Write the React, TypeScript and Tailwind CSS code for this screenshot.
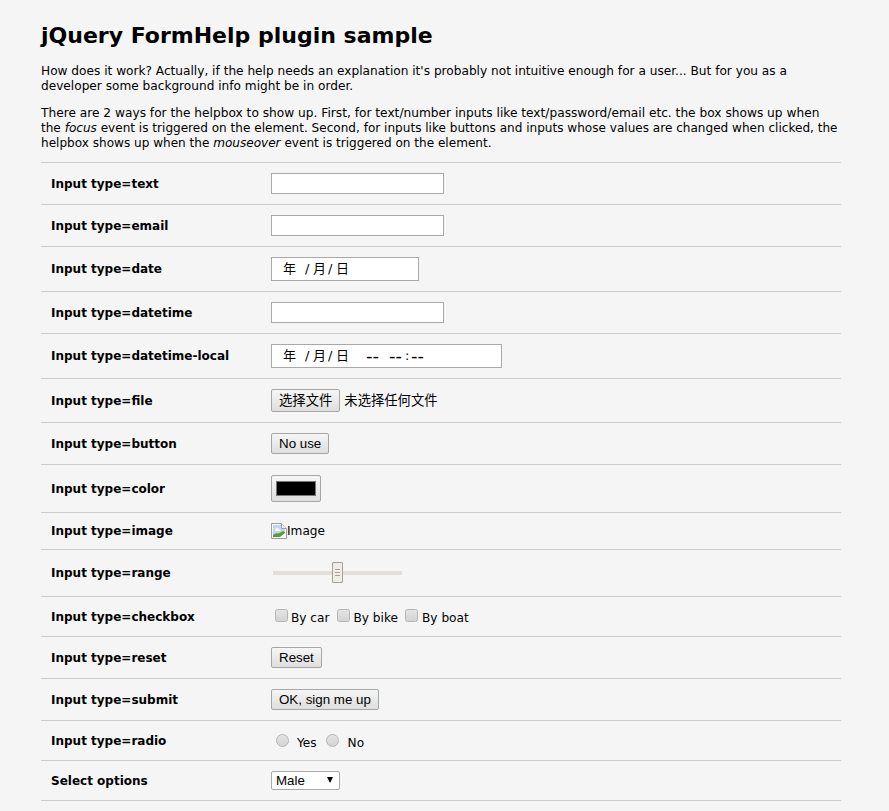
const verdana = "font-['DejaVu_Sans','Noto_Sans_CJK_SC',sans-serif]";
const arial = "font-['Liberation_Sans','Noto_Sans_CJK_SC',sans-serif]";

const buttonClass = `h-[21px] rounded-[2px] border border-[#a6a6a6] bg-gradient-to-b from-[#f6f6f6] to-[#dedede] px-[7px] text-[13.33px] leading-none text-black ${arial}`;
const boxClass = "h-[21px] w-[173px] border border-[#a9a9a9] bg-white";
const dateClass = `flex items-center border border-[#a9a9a9] bg-white pl-[11px] text-[13px] text-black whitespace-pre ${verdana}`;
const checkClass = "h-[13px] w-[13px] appearance-none rounded-[2.5px] border border-[#b5b5b5] bg-gradient-to-b from-[#e4e4e4] to-[#d4d4d4]";
const radioClass = "h-[13px] w-[13px] appearance-none rounded-full border border-[#b5b5b5] bg-gradient-to-b from-[#e4e4e4] to-[#d4d4d4]";
const dashClass = "inline-block text-[18px] leading-none";

function Row({ label, height, children }: { label: string; height: string; children: React.ReactNode }) {
  return (
    <div className={`flex items-center border-b border-[#cccccc] ${height}`}>
      <div className="w-[230px] shrink-0 pl-[10px] text-[12px] font-bold">{label}</div>
      {children}
    </div>
  );
}

function DateParts() {
  return (
    <>
      <span className="inline-block w-[21px]">年</span>
      <span className="inline-block w-[9px] pl-[1px]">/</span>
      <span className="inline-block w-[14px]">月</span>
      <span className="inline-block w-[9px] pl-[1px]">/</span>
      <span className="inline-block w-[13px]">日</span>
    </>
  );
}

function BrokenImage() {
  return (
    <svg width="16" height="16" viewBox="0 0 16 16" className="shrink-0">
      <path d="M0.5 0.5H10.5L15.5 5.5V15.5H0.5Z" fill="#fff" stroke="#a0a0a0" />
      <path d="M2 2H10V6H14V8L6 14H2Z" fill="#c0d6f6" />
      <path d="M4 7C4 5 7 4.5 8.5 6.5C9.5 6.5 10 7.5 9 8H4Z" fill="#fff" />
      <path d="M2 14V12C4 10.5 6 10 7.5 10.5L12 8L14 9V10L9 14Z" fill="#55a032" />
      <path d="M10.5 0.5V5.5H15.5" fill="#eeeeee" stroke="#a0a0a0" />
    </svg>
  );
}

export default function App() {
  return (
    <div className={`min-h-[811px] bg-[#f5f5f5] text-black ${verdana}`}>
      <div className="ml-[41px] w-[800px] pt-[21px]">
        <h1 className="text-[22px] font-bold leading-[30px]">jQuery FormHelp plugin sample</h1>
        <p className="mt-[13px] text-[12.15px] leading-[15px]">
          How does it work? Actually, if the help needs an explanation it's probably not intuitive enough for a user... But for you as a developer some background info might be in order.
        </p>
        <p className="mt-[12px] whitespace-nowrap text-[12.07px] leading-[15px]">
          <span className="text-[12.2px]">There are 2 ways for the helpbox to show up. First, for text/number inputs like text/password/email etc. the box shows up when</span>
          <br />
          the <em>focus</em> event is triggered on the element. Second, for inputs like buttons and inputs whose values are changed when clicked, the
          <br />
          helpbox shows up when the <em>mouseover</em> event is triggered on the element.
        </p>

        <div className="mt-[11px] border-t border-[#cccccc]">
          <Row label="Input type=text" height="h-[42px]">
            <input type="text" className={boxClass} />
          </Row>
          <Row label="Input type=email" height="h-[42px]">
            <input type="email" className={boxClass} />
          </Row>
          <Row label="Input type=date" height="h-[45px]">
            <div className={`h-[24px] w-[148px] ${dateClass}`}>
              <DateParts />
            </div>
          </Row>
          <Row label="Input type=datetime" height="h-[42px]">
            <input type="text" className={boxClass} />
          </Row>
          <Row label="Input type=datetime-local" height="h-[45px]">
            <div className={`h-[24px] w-[231px] ${dateClass}`}>
              <DateParts />
              <span className={`${dashClass} ml-[17px] w-[23px]`}>--</span>
              <span className={`${dashClass} w-[16px]`}>--</span>
              <span className="inline-block w-[6px]">:</span>
              <span className={dashClass}>--</span>
            </div>
          </Row>
          <Row label="Input type=file" height="h-[44px]">
            <button className={`${buttonClass} h-[23px]`}>选择文件</button>
            <span className={`ml-[4px] text-[13.33px] ${arial}`}>未选择任何文件</span>
          </Row>
          <Row label="Input type=button" height="h-[42px]">
            <button className={buttonClass}>No use</button>
          </Row>
          <Row label="Input type=color" height="h-[48px]">
            <button className="flex h-[27px] w-[50px] items-center justify-center rounded-[2px] border border-[#a6a6a6] bg-gradient-to-b from-[#f6f6f6] to-[#dedede]">
              <span className="h-[15px] w-[40px] border border-[#777777] bg-black" />
            </button>
          </Row>
          <Row label="Input type=image" height="h-[37px]">
            <div className="flex items-center text-[12.15px]">
              <BrokenImage />
              <span>Image</span>
            </div>
          </Row>
          <Row label="Input type=range" height="h-[47px]">
            <div className="relative ml-[2px] h-[4px] w-[129px] bg-[#e3dfd8]">
              <div className="absolute -top-[9px] left-[59px] flex h-[21px] w-[11px] flex-col items-center justify-center gap-[2px] rounded-[1px] border border-[#a89f94] bg-[#efedea]">
                <span className="h-px w-[5px] bg-[#a89f94]" />
                <span className="h-px w-[5px] bg-[#a89f94]" />
                <span className="h-px w-[5px] bg-[#a89f94]" />
              </div>
            </div>
          </Row>
          <Row label="Input type=checkbox" height="h-[40px]">
            <div className="flex items-center pl-[4px] text-[12.15px]">
              <input type="checkbox" className={`${checkClass} mb-[2px] mr-[3px]`} />
              <span className="mr-[8px] mt-[4px]">By car</span>
              <input type="checkbox" className={`${checkClass} mb-[2px] mr-[3px]`} />
              <span className="mr-[7px] mt-[4px]">By bike</span>
              <input type="checkbox" className={`${checkClass} mb-[2px] mr-[4px]`} />
              <span className="mt-[4px]">By boat</span>
            </div>
          </Row>
          <Row label="Input type=reset" height="h-[42px]">
            <button className={buttonClass}>Reset</button>
          </Row>
          <Row label="Input type=submit" height="h-[42px]">
            <button className={buttonClass}>OK, sign me up</button>
          </Row>
          <Row label="Input type=radio" height="h-[40px]">
            <div className="flex items-center pl-[5px] text-[12.15px]">
              <input type="radio" className={`${radioClass} mr-[8px]`} />
              <span className="mr-[9px] mt-[5px]">Yes</span>
              <input type="radio" className={`${radioClass} mr-[9px]`} />
              <span className="mt-[5px]">No</span>
            </div>
          </Row>
          <Row label="Select options" height="h-[40px]">
            <div className={`relative flex h-[19px] w-[69px] items-center rounded-[2px] border border-[#a9a9a9] bg-white pl-[4px] text-[13.33px] ${arial}`}>
              Male
              <span className="absolute right-[6px] top-[5px] h-0 w-0 border-x-[3px] border-t-[6px] border-x-transparent border-t-black" />
            </div>
          </Row>
        </div>
      </div>
    </div>
  );
}
